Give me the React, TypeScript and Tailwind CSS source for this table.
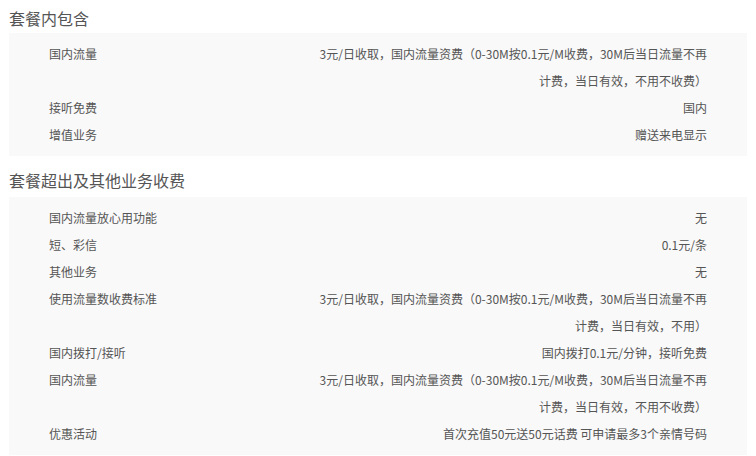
import type { ReactNode } from "react";

interface Row {
	label: string;
	value: ReactNode;
}

const included: Row[] = [
	{
		label: "国内流量",
		value: (
			<>
				<span className="block">
					3元/日收取，国内流量资费（0-30M按0.1元/M收费，30M后当日流量不再
				</span>
				<span className="block">计费，当日有效，不用不收费）</span>
			</>
		),
	},
	{ label: "接听免费", value: "国内" },
	{ label: "增值业务", value: "赠送来电显示" },
];

const extra: Row[] = [
	{ label: "国内流量放心用功能", value: "无" },
	{ label: "短、彩信", value: "0.1元/条" },
	{ label: "其他业务", value: "无" },
	{
		label: "使用流量数收费标准",
		value: (
			<>
				<span className="block">
					3元/日收取，国内流量资费（0-30M按0.1元/M收费，30M后当日流量不再
				</span>
				<span className="block">计费，当日有效，不用）</span>
			</>
		),
	},
	{ label: "国内拨打/接听", value: "国内拨打0.1元/分钟，接听免费" },
	{
		label: "国内流量",
		value: (
			<>
				<span className="block">
					3元/日收取，国内流量资费（0-30M按0.1元/M收费，30M后当日流量不再
				</span>
				<span className="block">计费，当日有效，不用不收费）</span>
			</>
		),
	},
	{ label: "优惠活动", value: "首次充值50元送50元话费 可申请最多3个亲情号码" },
];

function Section({ title, rows, first }: { title: string; rows: Row[]; first?: boolean }) {
	return (
		<section className={first ? "pt-[8px]" : "pt-[14px]"}>
			{/* 标题 */}
			<h2
				className={`px-[9px] text-[16px] leading-[20px] text-[#555] ${first ? "pb-[5px]" : "pb-[7px]"}`}
			>
				{title}
			</h2>
			{/* 明细 */}
			<div className="mx-[9px] bg-[#f9f9f9] px-[40px] pt-[7px] pb-[8px]">
				{rows.map((row, i) => (
					<div key={i} className="flex justify-between text-[12px] leading-[27px]">
						<span className="whitespace-nowrap">{row.label}</span>
						<span className="whitespace-nowrap text-right">{row.value}</span>
					</div>
				))}
			</div>
		</section>
	);
}

export default function App() {
	return (
		<div
			className="h-[456px] w-[756px] overflow-hidden bg-white text-[#555]"
			style={{ fontFamily: '"Noto Sans CJK SC", "Noto Sans", sans-serif' }}
		>
			<Section title="套餐内包含" rows={included} first />
			<Section title="套餐超出及其他业务收费" rows={extra} />
		</div>
	);
}
